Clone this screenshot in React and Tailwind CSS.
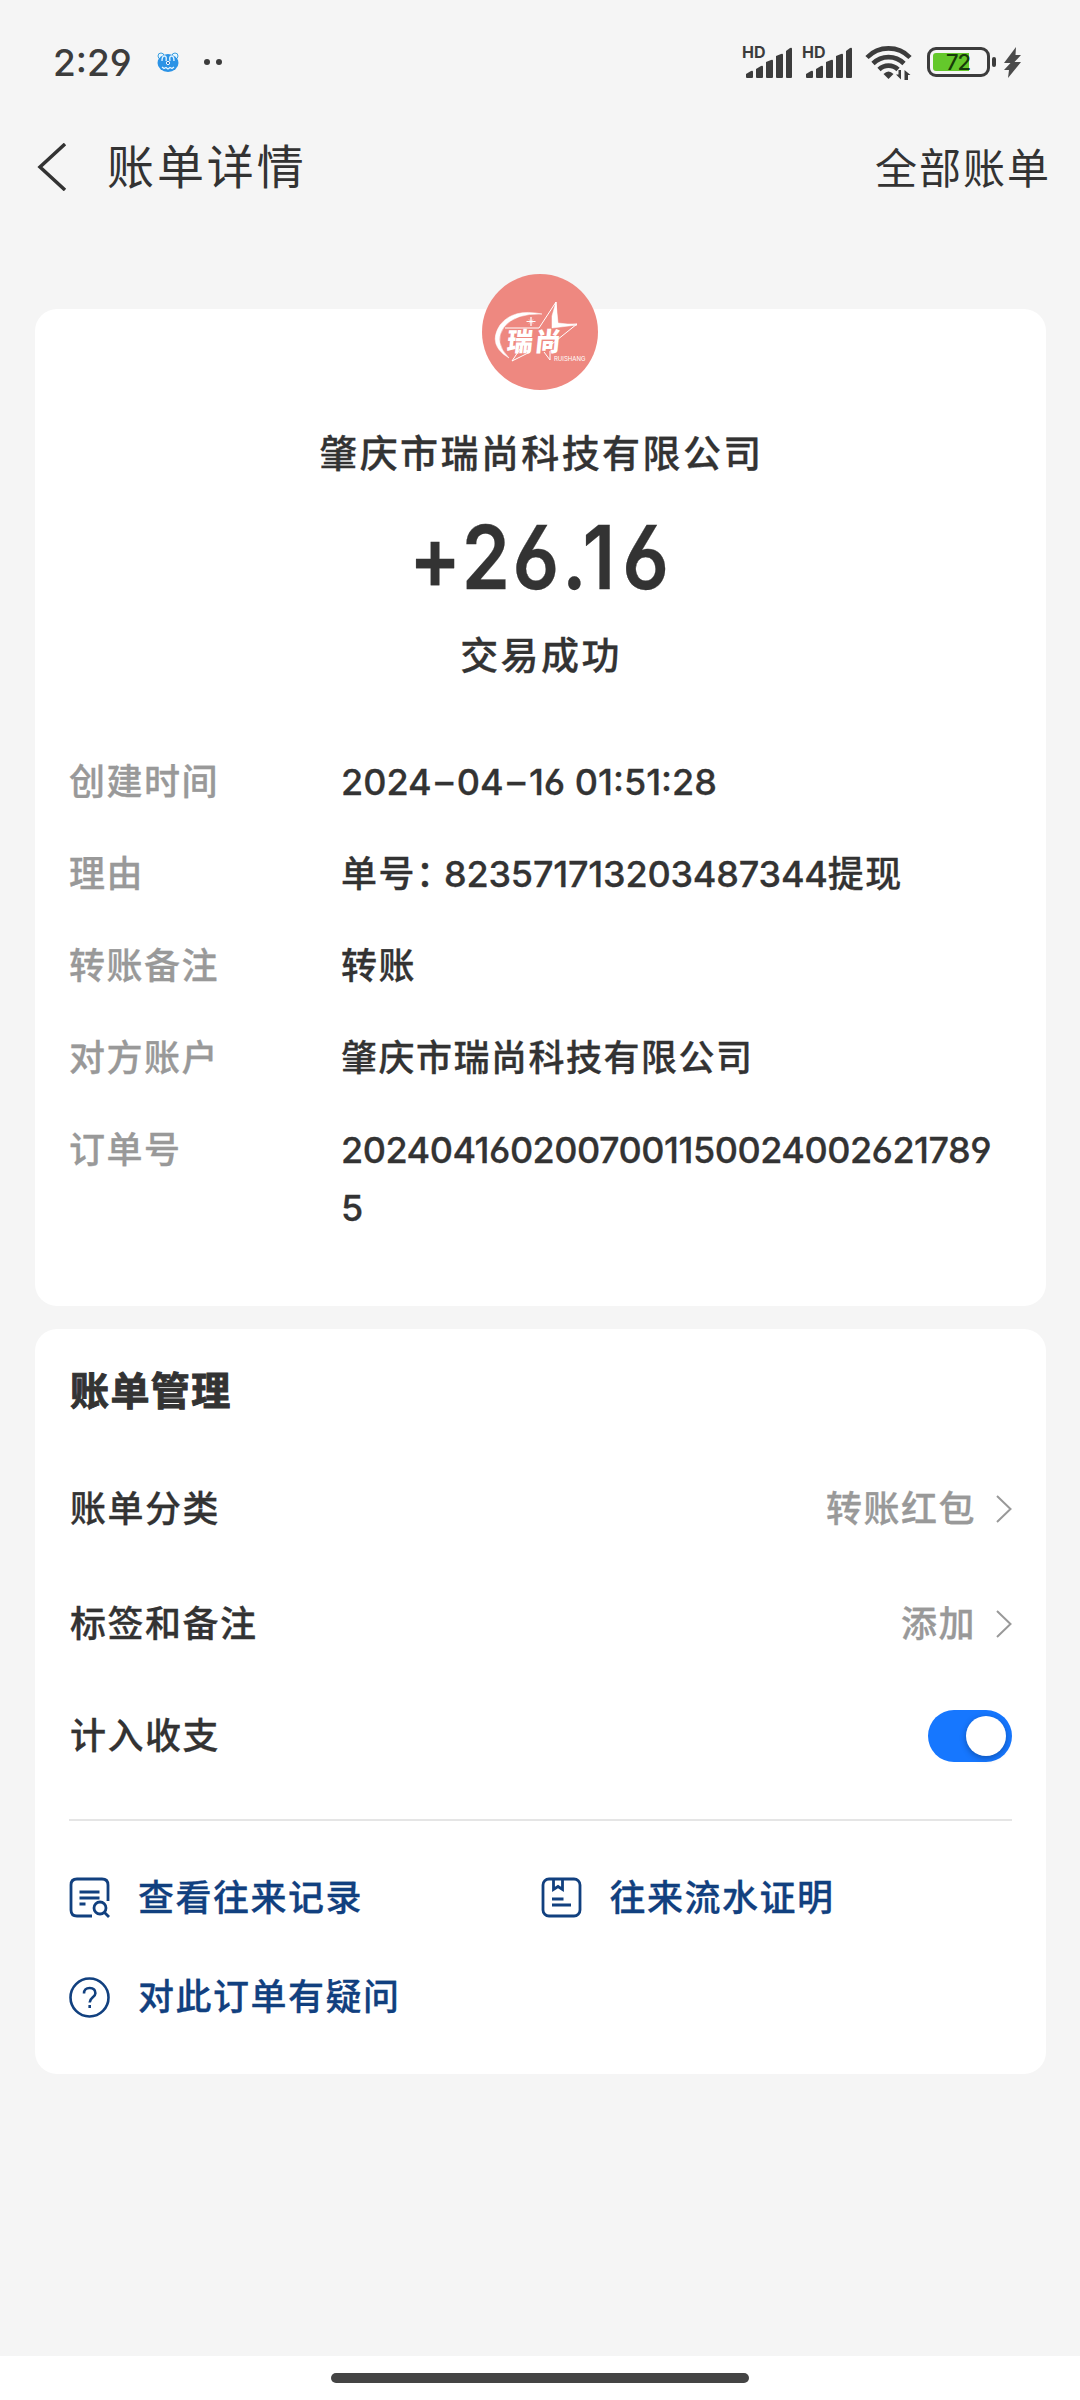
const details = [
	{ label: "创建时间", date: ["2024", "04", "16 01:51:28"] },
	{ label: "理由", order: "823571713203487344" },
	{ label: "转账备注", value: "转账", spacing: "tracking-[1.5px]" },
	{ label: "对方账户", value: "肇庆市瑞尚科技有限公司", spacing: "tracking-[1.5px]" },
	{
		label: "订单号",
		value: "20240416020070011500240026217895",
		spacing: "tracking-[-0.5px]",
	},
]

const Signal = () => (
	<div className="relative w-[50px] h-[33px]">
		<span className="absolute left-[-1px] top-0 text-[16px] leading-[12px] font-bold">
			HD
		</span>
		<svg className="absolute left-0 top-0" width="50" height="33" fill="currentColor">
			<path d="M3 31v-3l5-3q2-1 2 1v5q0 1-1 1H4q-1 0-1-1z" />
			<path d="M13 31v-8l5-3q2-1 2 1v10q0 1-1 1h-5q-1 0-1-1z" />
			<path d="M23 31V16l5-2q2-1 2 1v16q0 1-1 1h-5q-1 0-1-1z" />
			<path d="M33 31V10l5-2q2-1 2 1v22q0 1-1 1h-5q-1 0-1-1z" />
			<path d="M43 31V5l4-3q2-1 2 1v28q0 1-1 1h-4q-1 0-1-1z" />
		</svg>
	</div>
)

const StatusBar = () => (
	<div className="flex items-center h-[124px] pl-[53px] pr-[58px] text-[#3c3c3c]">
		<span className="text-[37px] leading-none font-medium">2:29</span>
		<svg className="ml-[25px]" width="22" height="20" viewBox="0 0 22 20">
			<circle cx="4" cy="4" r="3" fill="#e8f6fd" stroke="#3b9fe0" />
			<circle cx="18" cy="4" r="3" fill="#e8f6fd" stroke="#3b9fe0" />
			<ellipse cx="11" cy="11" rx="10.5" ry="9" fill="#2b93e6" />
			<path d="M5 9q0-5 2.500-5t1.500 5M13 9q-1-5 1.500-5t2.500 5" fill="none" stroke="#dff3ff" strokeWidth="1.4" />
			<circle cx="11" cy="11" r="1.6" fill="#1663b5" stroke="#fff" />
			<path d="M5 15l2 1.500 2-1 2 1.500 2-1.500 2 1 2-1.500" fill="none" stroke="#e7f6ff" strokeWidth="1.3" />
		</svg>
		<div className="flex gap-[6px] ml-[25px]">
			<i className="size-[6px] rounded-full bg-[#3c3c3c]" />
			<i className="size-[6px] rounded-full bg-[#3c3c3c]" />
		</div>
		<div className="flex items-center ml-auto">
			<Signal />
			<div className="w-[10px]" />
			<Signal />
			<svg className="ml-[12px]" width="48" height="36" viewBox="0 0 48 36" fill="none" stroke="currentColor" strokeWidth="4.6">
				<path d="M2 13.500a30 30 0 0 1 43 0" />
				<path d="M8 19.500a22 22 0 0 1 31 0" />
				<path d="M14 25.500a13.500 13.500 0 0 1 19 0" />
				<path d="M18.500 30q5-5 10 0l-5 5z" fill="currentColor" stroke="none" />
				<path d="M36 26v9.500l-5-5h2.500V26zM39.500 36v-10l6 5h-2.500v5z" fill="currentColor" stroke="none" />
			</svg>
			<div className="relative ml-[14px] w-[63px] h-[30px] rounded-[9px] border-[3px] border-[#3c3c3c] p-[3px]">
				<div className="w-[36px] h-full rounded-l-[3px] bg-[#64c82b]" />
				<span className="absolute left-[16px] top-[1px] text-[22px] leading-[23px] font-medium tracking-[-1px] text-[#173b08]">
					72
				</span>
			</div>
			<i className="ml-[2px] w-[4px] h-[10px] rounded-[2px] bg-[#3c3c3c]" />
			<svg className="ml-[7px]" width="19" height="31" viewBox="0 0 19 31" fill="#4b4b4b">
				<path d="M13 0L1 16h6.500L1 23h5l-1 8L18 15h-6.500l6.500-7h-5.500z" />
			</svg>
		</div>
	</div>
)

const Header = () => (
	<div className="flex items-center h-[86px] pl-[37px] pr-[29px] text-[#333]">
		<svg width="30" height="48" viewBox="0 0 30 48" fill="none" stroke="#333" strokeWidth="3.500">
			<path d="M28 1L3 24l25 23" />
		</svg>
		<h1 className="ml-[40px] pb-[2px] text-[47px] leading-none tracking-[2.9px]">
			账单详情
		</h1>
		<span className="ml-auto pt-[4px] text-[42px] leading-none tracking-[2px]">
			全部账单
		</span>
	</div>
)

const Logo = () => (
	<div className="relative size-[116px] rounded-full bg-[#ee8880]">
		<svg className="absolute inset-0" width="116" height="116" viewBox="0 0 116 116" fill="none" stroke="#fff">
			<path d="M60 40Q31 34 18 51Q5 71 27 84Q11 68 22 53Q33 39 60 40z" fill="#fff" strokeWidth="0.500" />
			<path d="M23 54h34L74 28l1 23 20-1-25 20M62 78l6 8v-9M48 78l-18 9 8-12" strokeWidth="1" />
			<path d="M74 28l-4 14v12l25-3-19-2z" fill="#fff" strokeWidth="0.500" />
			<path d="M49 43v9M44.500 47.500h9" strokeWidth="1.200" />
			<path d="M47 45.500l4 4M51 45.500l-4 4" strokeWidth="0.700" />
		</svg>
		<span className="absolute left-[25px] top-[56px] text-[26px] leading-[24px] font-black text-white tracking-[2px] whitespace-nowrap -skew-x-6">
			瑞尚
		</span>
		<span className="absolute left-[72px] top-[82px] text-[6px] leading-[6px] text-white whitespace-nowrap">
			RUISHANG
		</span>
	</div>
)

const Chevron = () => (
	<svg className="ml-[20px]" width="16" height="28" viewBox="0 0 16 28" fill="none" stroke="#999" strokeWidth="2">
		<path d="M1 1l13.500 13L1 27" />
	</svg>
)

const SearchIcon = () => (
	<svg className="-mt-[2px]" width="42" height="42" viewBox="0 0 42 42" fill="none" stroke="#11407f" strokeWidth="2.800">
		<path d="M39 24V8q0-6-6-6H8q-6 0-6 6v25q0 6 6 6h15" />
		<path d="M10.500 15h20M10.500 21h20M10.500 27h6" />
		<circle cx="31" cy="31" r="6" />
		<path d="M35 35l5 5" />
	</svg>
)

const ProofIcon = () => (
	<svg className="-mt-[2px]" width="42" height="42" viewBox="0 0 42 42" fill="none" stroke="#11407f" strokeWidth="2.800">
		<rect x="2" y="2" width="37" height="37" rx="6" />
		<path d="M12.500 2v10.500l4.500-3 4.500 3V2M11 22h11.500M11 28h19" />
	</svg>
)

const QuestionIcon = () => (
	<svg width="42" height="42" viewBox="0 0 42 42" fill="none" stroke="#11407f" strokeWidth="2.600">
		<circle cx="20.500" cy="20.500" r="19" />
		<path d="M15 16.500q0-5.500 5.700-5.500t5.700 5.300c0 4-5.700 4.200-5.700 9.200M20.700 28v3" />
	</svg>
)

const DetailValue = ({ item }) => {
	if (item.date) {
		return (
			<dd>
				{item.date[0]}
				<span className="mx-[3.600px]">–</span>
				{item.date[1]}
				<span className="mx-[3.600px]">–</span>
				{item.date[2]}
			</dd>
		)
	}
	if (item.order) {
		return (
			<dd className="flex">
				<span className="tracking-[1.5px]">单号</span>
				<span className="w-[28px] [font-feature-settings:'halt']">：</span>
				<span className="tracking-[-0.2px]">{item.order}</span>
				<span className="tracking-[1.5px]">提现</span>
			</dd>
		)
	}
	return <dd className={"w-[664px] break-all " + item.spacing}>{item.value}</dd>
}

const App = () => {
	return (
		<div className="flex flex-col w-[1080px] h-[2400px] bg-[#f5f5f5] text-[#333] font-['Inter','Noto_Sans_CJK_SC',sans-serif] [font-feature-settings:'cv03','cv04']">
			<StatusBar />
			<Header />

			<section className="flex flex-col items-center mt-[99px] ml-[35px] mr-[34px] h-[997px] rounded-[22px] bg-white px-[35px] [-webkit-text-stroke:0.3px]">
				<div className="-mt-[35px] -ml-px [-webkit-text-stroke:0px]">
					<Logo />
				</div>
				<p className="mt-[35px] pl-[2px] text-[38px] leading-[56px] font-medium tracking-[2.4px]">
					肇庆市瑞尚科技有限公司
				</p>
				<p className="mt-[38px] text-[88px] leading-[76px] font-semibold tracking-[3px] scale-x-[0.88]">
					+26.1<span className="ml-[5px]">6</span>
				</p>
				<p className="mt-[32px] pl-[1px] text-[38px] leading-[56px] font-medium tracking-[2.4px]">
					交易成功
				</p>
				<dl className="flex flex-col gap-[34px] self-stretch mt-[70px] text-[36px] leading-[58px] font-medium">
					{details.map((item) => (
						<div key={item.label} className="flex">
							<dt className="w-[271px] -ml-px mr-px text-[#999] tracking-[1.5px]">
								{item.label}
							</dt>
							<DetailValue item={item} />
						</div>
					))}
				</dl>
			</section>

			<section className="mt-[23px] ml-[35px] mr-[34px] h-[745px] rounded-[22px] bg-white px-[34px] text-[36px] font-medium tracking-[1.5px] [-webkit-text-stroke:0.3px]">
				<h2 className="pt-[34px] pl-[1px] text-[39px] leading-[56px] font-bold tracking-[1.400px] [-webkit-text-stroke:1px]">
					账单管理
				</h2>
				<div className="flex items-center mt-[32px] h-[115px] pl-px">
					<span>账单分类</span>
					<span className="ml-auto text-[#999]">转账红包</span>
					<Chevron />
				</div>
				<div className="flex items-center h-[115px] pl-px">
					<span>标签和备注</span>
					<span className="ml-auto text-[#999]">添加</span>
					<Chevron />
				</div>
				<div className="flex items-center h-[110px] pl-px">
					<span>计入收支</span>
					<div className="flex justify-end ml-auto w-[84px] h-[52px] rounded-full bg-[#1677ff] p-[6px]">
						<div className="size-[40px] rounded-full bg-white shadow-[0_2px_6px_rgba(0,0,0,0.3)]" />
					</div>
				</div>
				<div className="mt-[28px] h-[2px] bg-[#e5e5e5]" />
				<div className="grid grid-cols-2 gap-y-[42px] mt-[49px] leading-[57px] text-[#11407f]">
					<div className="flex items-center gap-[27px]">
						<SearchIcon />
						<span>查看往来记录</span>
					</div>
					<div className="flex items-center gap-[27px]">
						<ProofIcon />
						<span>往来流水证明</span>
					</div>
					<div className="flex items-center gap-[27px]">
						<QuestionIcon />
						<span>对此订单有疑问</span>
					</div>
				</div>
			</section>

			<div className="flex justify-center mt-auto h-[44px] bg-white pt-[17px]">
				<div className="w-[418px] h-[10px] rounded-full bg-[#444]" />
			</div>
		</div>
	)
}

export default App
